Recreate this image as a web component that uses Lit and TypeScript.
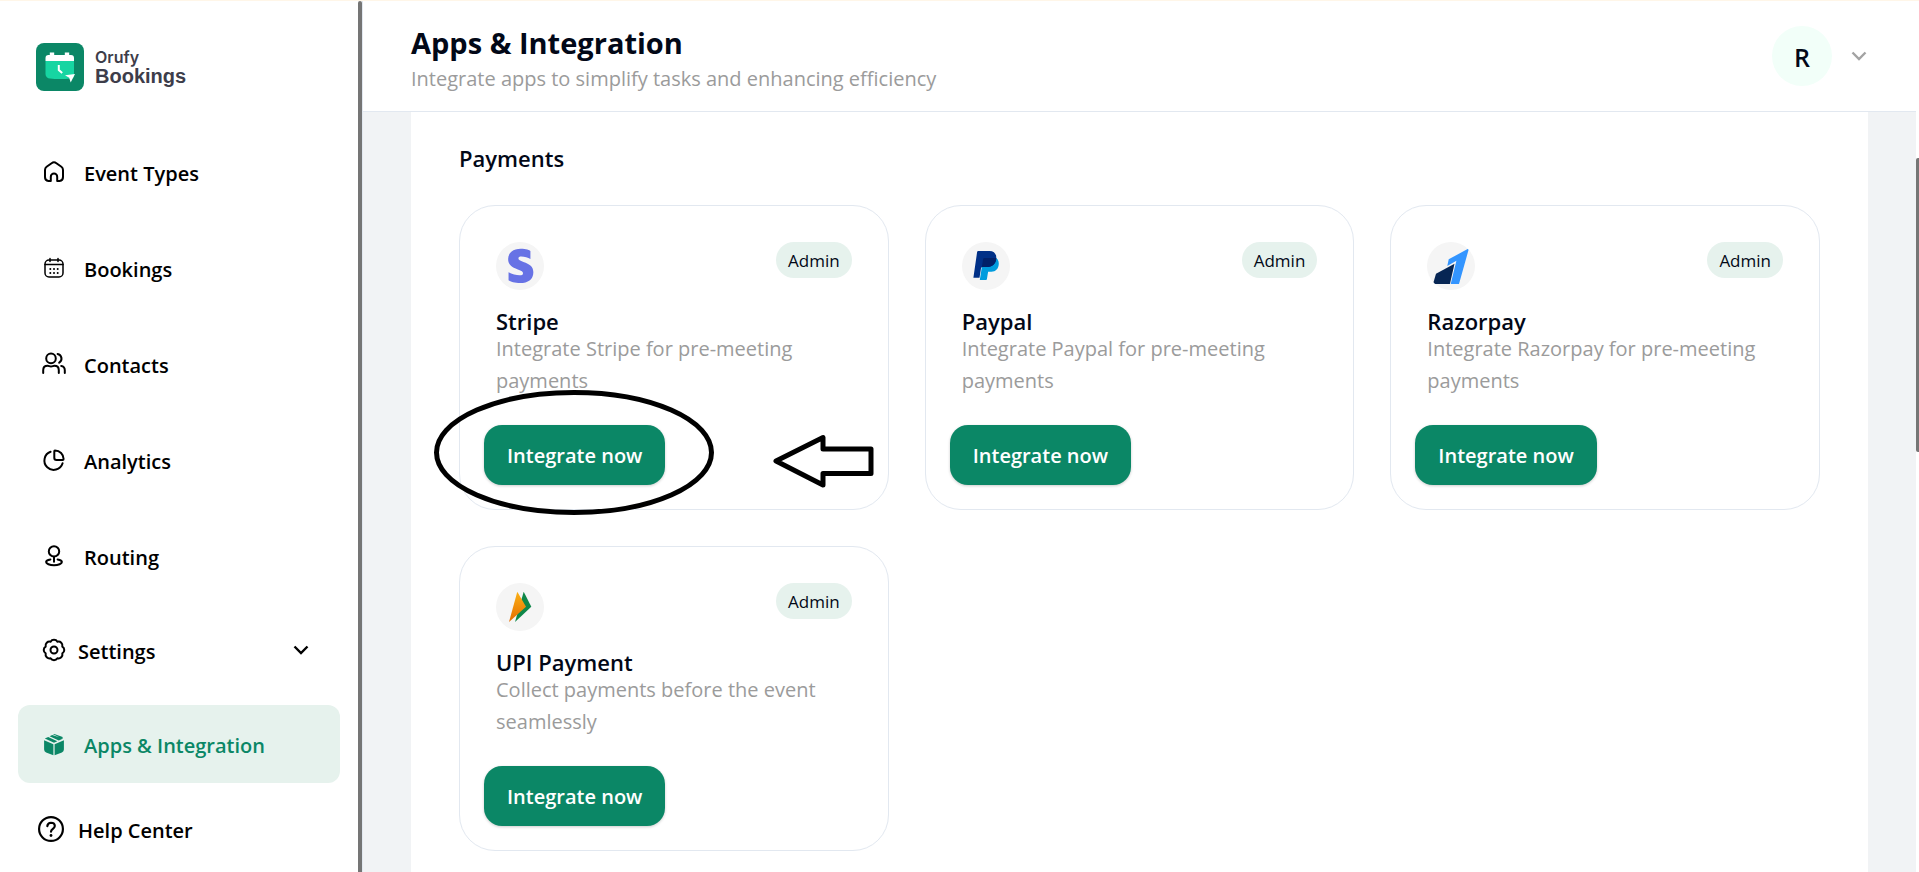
import { LitElement, html, css, svg, type TemplateResult } from "lit";
import { customElement, property } from "lit/decorators.js";
import { classMap } from "lit/directives/class-map.js";

const line = (body: TemplateResult, size = 24) => html`
  <svg viewBox="0 0 24 24" width=${size} height=${size} fill="none" stroke="currentColor"
    stroke-width="2" stroke-linecap="round" stroke-linejoin="round" aria-hidden="true">${body}</svg>`;

const icons: Record<string, TemplateResult> = {
  home: line(svg`<path d="M8.8 21H6.4A4 4 0 0 1 3 17V10a4 4 0 0 1 1.600-3.200l5-3.600a4 4 0 0 1 4.800 0l5 3.600A4 4 0 0 1 21 10v7a4 4 0 0 1-3.400 4h-2.400v-4.200a3.200 3.200 0 0 0-6.400 0z"/>`),
  calendar: line(svg`<rect x="3" y="4" width="18" height="17" rx="4" stroke-width="1.500"/><path d="M3 8.600h18M8 2.600v3M16 2.600v3" stroke-width="1.500"/>
    <path d="M8.300 13h.01M12 13h.01M15.700 13h.01M8.300 17h.01M12 17h.01M15.700 17h.01" stroke-width="2"/>`),
  users: line(svg`<circle cx="9" cy="6.400" r="4.800"/><path d="M1.200 21v-2.800c0-3 2-4.400 4.400-4.400 1.400 0 1.800.7 3.400.7s2-.7 3.400-.7c2.400 0 4.400 1.400 4.400 4.400V21"/>
    <path d="M15.600 1.900a4.800 4.800 0 0 1 1.600 8.800M19.200 13.900c2.200.3 3.600 1.700 3.600 4.300V21"/>`),
  pie: line(svg`<path d="M20.600 15.300A9.300 9.300 0 1 1 8.600 3.800"/><path d="M13 2.400a8.600 8.600 0 0 1 8.600 8.600 1 1 0 0 1-1 1H14.500a2.200 2.200 0 0 1-2.200-2.200V3.200a.8.8 0 0 1 .7-.8z"/>`),
  pin: line(svg`<circle cx="12" cy="7.400" r="5.200"/><path d="M12 12.800v5"/><path d="M8.400 15.500c-2.700.5-4.300 1.400-4.300 2.600 0 1.700 3.500 3.100 7.900 3.100s7.900-1.400 7.900-3.100c0-1.200-1.600-2.100-4.300-2.600"/>`),
  gear: line(svg`<circle cx="12" cy="12" r="3.500"/><path d="M8.560 3.690A4 4 0 0 1 15.440 3.690A4 4 0 0 1 20.310 8.560A4 4 0 0 1 20.310 15.440A4 4 0 0 1 15.440 20.310A4 4 0 0 1 8.560 20.310A4 4 0 0 1 3.690 15.440A4 4 0 0 1 3.690 8.560A4 4 0 0 1 8.560 3.690z"/>`),
  box: html`<svg viewBox="0 0 24 24" width="24" height="24" fill="currentColor" aria-hidden="true">
    <path d="M2.100 8.200l9.300 4v11l-7.300-2.800a3 3 0 0 1-2-2.800zM21.900 8.200l-9.300 4v11l7.300-2.800a3 3 0 0 0 2-2.800z"/>
    <path d="M2.800 6.600L6.200 5l9.200 4.200-3.400 1.600zM21.200 6.600l-4.400 2L7.600 4.300l2.600-1.200zM11 2.200a3 3 0 0 1 2 0l7 2.600a3 3 0 0 1 1 .8l-1.600.7z"/></svg>`,
  help: line(svg`<circle cx="12" cy="12" r="11"/><path d="M8.600 9.400A3.500 3.500 0 0 1 12 6.200c2 0 3.500 1.300 3.500 3.100 0 2.500-3.500 2.700-3.500 5.200"/><path d="M12 18v.01" stroke-width="2.600"/>`, 26),
  down: html`<svg viewBox="0 0 16 10" width="16" height="10" fill="none" stroke="currentColor" stroke-width="2.400" aria-hidden="true"><path d="M1.500 1.500L8 8l6.500-6.500"/></svg>`,
};

const logos: Record<string, TemplateResult> = {
  stripe: svg`<path fill="#6772e5" transform="translate(6.500 6.800) scale(1.500 1.430)" d="M13.976 9.150c-2.172-.806-3.356-1.426-3.356-2.409 0-.831.683-1.305 1.901-1.305 2.227 0 4.515.858 6.090 1.631V1.573C18.252.975 15.697 0 12.165 0 9.667 0 7.589.654 6.104 1.872 4.560 3.147 3.757 4.992 3.757 7.218c0 4.039 2.467 5.760 6.476 7.219 2.585.920 3.445 1.574 3.445 2.583 0 .980-.840 1.545-2.354 1.545-1.875 0-5.265-.921-7.290-2.109v5.555C5.175 22.990 8.385 24 11.714 24c2.641 0 4.843-.624 6.328-1.813 1.664-1.305 2.525-3.236 2.525-5.732 0-4.128-2.524-5.851-6.594-7.305z"/>`,
  paypal: svg`<path fill="#009cde" d="M20 24l-2.200 14h6.100a1 1 0 0 0 1-.8l1.200-7.400h3.400c4 0 7.300-3 7.300-8.200 0-3-1.400-5-3.300-5.800z"/>
    <path fill="#003087" d="M16.300 9h11.200c4 0 6.800 2.400 6.800 6.500 0 6.300-4 9.600-9.600 9.600h-4.200a1.500 1.500 0 0 0-1.500 1.200L17.500 35.800h-6.100l3.700-25.700A1.300 1.300 0 0 1 16.300 9z"/>
    <path fill="#012169" d="M19.800 25.500l1.300-8.400a1.300 1.300 0 0 1 1.300-1.100h11.900c-.2 6-4.200 9.100-9.600 9.100h-3.700c-.6 0-.9.100-1.200.4z"/>`,
  razorpay: svg`<path fill="#3395ff" d="M42 6.300L32 42h-8.300l5.700-23.300L20.300 24l1.400-6.700z"/><path fill="#072654" d="M27.500 21.700L22.900 42H6l3-10.300z"/>`,
  upi: svg`<defs><linearGradient id="amber" x1="0" y1="0" x2="0" y2="1"><stop offset="0" stop-color="#fbb216"/><stop offset="1" stop-color="#e66c00"/></linearGradient></defs>
    <path fill="#0f8749" d="M27.700 8.700l7.600 15L19 39l2-7z"/><path fill="url(#amber)" d="M21.300 8.700l8.700 15L13 39z"/>`,
};

interface NavItem { label: string; icon: string; kind?: string; }

const navItems: NavItem[] = [
  { label: "Event Types", icon: "home" },
  { label: "Bookings", icon: "calendar" },
  { label: "Contacts", icon: "users" },
  { label: "Analytics", icon: "pie" },
  { label: "Routing", icon: "pin" },
  { label: "Settings", icon: "gear", kind: "group" },
  { label: "Apps & Integration", icon: "box", kind: "active" },
  { label: "Help Center", icon: "help", kind: "help" },
];

const providers = [
  { id: "stripe", name: "Stripe", text: "Integrate Stripe for pre-meeting payments", marked: true },
  { id: "paypal", name: "Paypal", text: "Integrate Paypal for pre-meeting payments" },
  { id: "razorpay", name: "Razorpay", text: "Integrate Razorpay for pre-meeting payments" },
  { id: "upi", name: "UPI Payment", text: "Collect payments before the event seamlessly" },
];

@customElement("side-nav")
class SideNav extends LitElement {
  static styles = css`
    :host { display: flex; flex-direction: column; background: #fff; border-top-left-radius: 12px; padding: 42px 18px 0; box-sizing: border-box; overflow: hidden; }
    .brand { display: flex; align-items: center; gap: 11px; padding-left: 18px; margin-bottom: 42px; color: #3d3d4a; text-decoration: none; }
    .name { display: grid; }
    .small { font: 600 16px/18px Inter, sans-serif; }
    .big { font: 700 20px/20px "Liberation Sans", Arial, sans-serif; }
    .list { display: flex; flex-direction: column; gap: 18px; margin: 0; padding: 0; list-style: none; }
    .item { display: flex; align-items: center; width: 100%; height: 78px; box-sizing: border-box; padding: 0 31px 0 24px; gap: 18px; border: 0; border-radius: 12px; background: none; color: #000; font: 600 20px/30px "Open Sans", "Noto Sans", sans-serif; text-decoration: none; text-align: left; }
    .item svg { flex: none; }
    .label { padding-top: 3px; }
    .group { height: 74px; gap: 12px; }
    .group .label { flex: 1; }
    .help { height: 56px; gap: 14px; padding-left: 20px; }
    .active { background: #e6f2ed; color: #0b8766; }
  `;
  render() {
    return html`
      <a class="brand" href="#">
        <svg width="48" height="48" viewBox="0 0 48 48" aria-hidden="true">
          <rect width="48" height="48" rx="8" fill="#0b8766"/>
          <path d="M9.500 18h28.500v14.500a3 3 0 0 1-3 3q-12 1-21 0a4.500 4.500 0 0 1-4.500-4.500z" fill="#17d5a2"/>
          <path d="M9.500 18v-3a3 3 0 0 1 3-3h1.300V9.500h4.400V12h10.600V9.500h4.400V12H35a3 3 0 0 1 3 3v3z" fill="#fff"/>
          <path d="M22.800 22v5l3.400 3" fill="none" stroke="#fff" stroke-width="2"/>
          <path d="M29 32.300l10-1.300-4.300 8.500-1.500-4.700z" fill="#fff"/>
        </svg>
        <span class="name"><span class="small">Orufy</span><span class="big">Bookings</span></span>
      </a>
      <nav><ul class="list">
        ${navItems.map((n) => {
          const cls = classMap({ item: true, [n.kind ?? "plain"]: true });
          const body = html`${icons[n.icon]}<span class="label">${n.label}</span>`;
          return html`<li>${n.kind === "group"
            ? html`<button class=${cls} type="button" aria-expanded="false">${body}${icons.down}</button>`
            : html`<a class=${cls} href="#">${body}</a>`}</li>`;
        })}
      </ul></nav>`;
  }
}

@customElement("provider-card")
class ProviderCard extends LitElement {
  @property() logo = "";
  @property() name = "";
  @property() text = "";
  @property({ type: Boolean }) marked = false;

  static styles = css`
    :host { display: block; }
    .card { position: relative; height: 100%; box-sizing: border-box; display: flex; flex-direction: column; align-items: flex-start; border: 1px solid #e2e8f0; border-radius: 36px; padding: 36px 24px 24px; background: #fff; }
    .top { display: flex; align-items: flex-start; justify-content: space-between; align-self: stretch; padding: 0 12px; }
    .logo { width: 48px; height: 48px; border-radius: 50%; background: #f5f5f5; }
    .badge { border-radius: 18px; background: #e6f2ed; color: #020817; padding: 2px 12px 0; font-size: 17px; line-height: 34px; }
    .name { margin: 19px 12px 0; font-size: 22px; line-height: 24px; font-weight: 600; color: #020817; }
    .text { margin: 0 12px 28px; font-size: 20px; line-height: 32px; color: #9b9b9b; }
    .go { height: 60px; margin-top: auto; padding: 2px 23px 0; border: 0; border-radius: 18px; background: #0b8766; color: #fff; font: 600 20px/28px "Open Sans", "Noto Sans", sans-serif; box-shadow: 0 1px 3px rgba(0, 0, 0, 0.2); }
    .mark { position: absolute; left: 0; top: 0; overflow: visible; pointer-events: none; }
  `;
  render() {
    return html`<article class="card">
      <div class="top">
        <svg class="logo" viewBox="0 0 48 48" aria-hidden="true">${logos[this.logo]}</svg>
        <span class="badge">Admin</span>
      </div>
      <h3 class="name">${this.name}</h3>
      <p class="text">${this.text}</p>
      <button class="go" type="button">Integrate now</button>
      ${this.marked ? html`<svg class="mark" width="420" height="300" viewBox="0 0 420 300" fill="none" stroke="#000" stroke-width="5" stroke-linejoin="round" aria-hidden="true">
        <ellipse cx="114" cy="246.500" rx="137.500" ry="60"/>
        <path d="M316 255L363 231.500v11.500h48v24.500H363V279z"/></svg>` : ""}
    </article>`;
  }
}

@customElement("app-root")
class AppRoot extends LitElement {
  static styles = css`
    :host { display: grid; grid-template-columns: 358px 4px minmax(0, 1fr) 3px; height: 100vh; box-sizing: border-box; overflow: hidden; border-top: 1px solid #fff6e8; background: #fff; font-family: "Open Sans", "Noto Sans", sans-serif; color: #020817; }
    .bar { background: #757575; border-radius: 2px 2px 0 0; }
    .main { display: flex; flex-direction: column; min-height: 0; border-left: 1px solid #e2e8f0; background: #f1f3f5; }
    .head { display: flex; justify-content: space-between; align-items: center; padding: 24px 49px 15px 48px; border-bottom: 1px solid #e2e8f0; background: #fff; }
    .title { margin: 0; font-size: 29px; line-height: 36px; font-weight: 700; }
    .sub { margin: 0; font-size: 20px; line-height: 35px; color: #9b9b9b; }
    .user { display: flex; align-items: center; gap: 19px; padding: 0; margin-bottom: 9px; border: 0; background: none; color: #a3a3a3; }
    .avatar { width: 60px; box-sizing: border-box; padding-top: 2px; border-radius: 50%; background: #f2fff9; color: #020817; text-align: center; font: 600 25px/58px "Open Sans", "Noto Sans", sans-serif; }
    .body { flex: 1; min-height: 0; overflow: hidden; padding: 0 48px; }
    .panel { background: #fff; padding: 28px 48px 48px; }
    .section { margin: 0 0 29px; font-size: 22px; line-height: 36px; font-weight: 600; color: #020817; }
    .grid { display: grid; grid-template-columns: repeat(3, minmax(0, 1fr)); gap: 36px; }
    .track { padding-top: 157px; }
    .thumb { height: 294px; background: #757575; border-radius: 2px 0 0 2px; }
  `;
  render() {
    return html`
      <side-nav></side-nav>
      <div class="bar"></div>
      <main class="main">
        <header class="head">
          <div>
            <h1 class="title">Apps &amp; Integration</h1>
            <p class="sub">Integrate apps to simplify tasks and enhancing efficiency</p>
          </div>
          <button class="user" type="button" aria-label="Account">
            <span class="avatar">R</span>${icons.down}
          </button>
        </header>
        <div class="body">
          <section class="panel">
            <h2 class="section">Payments</h2>
            <div class="grid">
              ${providers.map((p) => html`<provider-card .logo=${p.id} .name=${p.name} .text=${p.text} ?marked=${p.marked}></provider-card>`)}
            </div>
          </section>
        </div>
      </main>
      <div class="track"><div class="thumb"></div></div>`;
  }
}
